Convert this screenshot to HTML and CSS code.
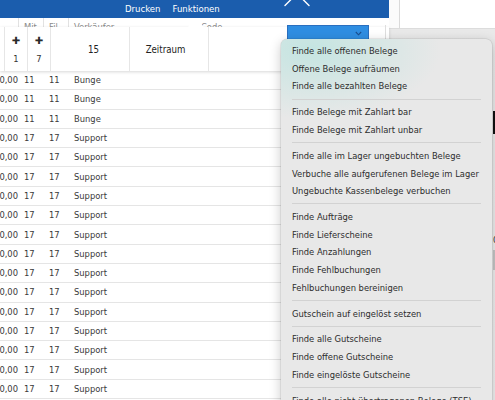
FILE: index.html
```html
<!DOCTYPE html>
<html lang="de">
<head>
<meta charset="utf-8">
<title>Belege</title>
<link rel="stylesheet" href="styles.css">
</head>
<body>
<div class="screen">
  <div class="app">
    <div class="topbar">
      <nav class="nav"><span class="nav-link">Drucken</span><span class="nav-link">Funktionen</span></nav>
      <svg class="x-icon" width="26" height="18" viewBox="0 0 26 18"><path d="M1 5.5 L7.5 -1 M18.5 -1 L25 5.5" stroke="#fff" stroke-width="1.4" fill="none" stroke-linecap="round"/></svg>
    </div>
    <div class="thead">
      <div class="th th-first"></div>
      <div class="th">Mit</div>
      <div class="th">Fil</div>
      <div class="th">Verkäufer</div>
      <div class="th th-code">Code</div>
    </div>
    <div class="toolbar">
      <div class="tcell tcell-edge"></div>
      <div class="tcell tcell-plus"><span class="plus">✚</span><span class="num">1</span></div>
      <div class="tcell tcell-plus"><span class="plus">✚</span><span class="num">7</span></div>
      <div class="tcell tcell-wide tcell-count">15</div>
      <div class="tcell tcell-wide tcell-range">Zeitraum</div>
      <div class="tcell tcell-rest">
        <div class="select"><svg class="chev" width="7" height="5" viewBox="0 0 7 5"><path d="M0.8 1 L3.5 3.8 L6.2 1" stroke="#1b4f8e" stroke-width="1.1" fill="none"/></svg></div>
        <div class="select-side"></div>
      </div>
    </div>
    <div class="rows">
      <div class="row"><span class="amt">0,00</span><span>11</span><span>11</span><span>Bunge</span></div>
      <div class="row"><span class="amt">0,00</span><span>11</span><span>11</span><span>Bunge</span></div>
      <div class="row"><span class="amt">0,00</span><span>11</span><span>11</span><span>Bunge</span></div>
      <div class="row"><span class="amt">0,00</span><span>17</span><span>17</span><span>Support</span></div>
      <div class="row"><span class="amt">0,00</span><span>17</span><span>17</span><span>Support</span></div>
      <div class="row"><span class="amt">0,00</span><span>17</span><span>17</span><span>Support</span></div>
      <div class="row"><span class="amt">0,00</span><span>17</span><span>17</span><span>Support</span></div>
      <div class="row"><span class="amt">0,00</span><span>17</span><span>17</span><span>Support</span></div>
      <div class="row"><span class="amt">0,00</span><span>17</span><span>17</span><span>Support</span></div>
      <div class="row"><span class="amt">0,00</span><span>17</span><span>17</span><span>Support</span></div>
      <div class="row"><span class="amt">0,00</span><span>17</span><span>17</span><span>Support</span></div>
      <div class="row"><span class="amt">0,00</span><span>17</span><span>17</span><span>Support</span></div>
      <div class="row"><span class="amt">0,00</span><span>17</span><span>17</span><span>Support</span></div>
      <div class="row"><span class="amt">0,00</span><span>17</span><span>17</span><span>Support</span></div>
      <div class="row"><span class="amt">0,00</span><span>17</span><span>17</span><span>Support</span></div>
      <div class="row"><span class="amt">0,00</span><span>17</span><span>17</span><span>Support</span></div>
      <div class="row"><span class="amt">0,00</span><span>17</span><span>17</span><span>Support</span></div>
      <div class="row"><span class="amt">0,00</span><span>17</span><span>17</span><span>Support</span></div>
    </div>
  </div>
  <div class="side">
    <div class="side-top"><div class="side-top-line"></div></div>
    <div class="side-body">
      <div class="side-dark"></div>
      <div class="side-zero">0</div>
      <div class="side-scroll"></div>
    </div>
  </div>
  <div class="menu">
    <div class="mi">Finde alle offenen Belege</div>
    <div class="mi">Offene Belege aufräumen</div>
    <div class="mi">Finde alle bezahlten Belege</div>
    <div class="sep"></div>
    <div class="mi">Finde Belege mit Zahlart bar</div>
    <div class="mi">Finde Belege mit Zahlart unbar</div>
    <div class="sep"></div>
    <div class="mi">Finde alle im Lager ungebuchten Belege</div>
    <div class="mi">Verbuche alle aufgerufenen Belege im Lager</div>
    <div class="mi">Ungebuchte Kassenbelege verbuchen</div>
    <div class="sep"></div>
    <div class="mi">Finde Aufträge</div>
    <div class="mi">Finde Lieferscheine</div>
    <div class="mi">Finde Anzahlungen</div>
    <div class="mi">Finde Fehlbuchungen</div>
    <div class="mi">Fehlbuchungen bereinigen</div>
    <div class="sep"></div>
    <div class="mi">Gutschein auf eingelöst setzen</div>
    <div class="sep"></div>
    <div class="mi">Finde alle Gutscheine</div>
    <div class="mi">Finde offene Gutscheine</div>
    <div class="mi">Finde eingelöste Gutscheine</div>
    <div class="sep"></div>
    <div class="mi">Finde alle nicht übertragenen Belege (TSE)</div>
  </div>
</div>
</body>
</html>
```

FILE: styles.css
```css
html, body {
  margin: 0;
  padding: 0;
  width: 495px;
  height: 400px;
  overflow: hidden;
  background: #ececec;
}

.screen {
  position: relative;
  display: flex;
  width: 495px;
  height: 400px;
  overflow: hidden;
  font-family: "DejaVu Sans Condensed", "DejaVu Sans", sans-serif;
  font-stretch: condensed;
  font-size: 9.3px;
  color: #3a3a3a;
}

.app {
  width: 389px;
  flex: none;
  display: flex;
  flex-direction: column;
  background: #fff;
}

/* top blue bar */
.topbar {
  height: 18px;
  background: #1b5dad;
  display: flex;
  align-items: flex-start;
  flex: none;
}
.nav {
  box-sizing: border-box;
  width: 284px;
  padding-left: 125px;
  display: flex;
  gap: 12px;
  height: 18px;
  align-items: center;
}
.nav-link {
  color: #fff;
  font-size: 9.5px;
  line-height: 18px;
}
.x-icon {
  display: block;
}

/* table header (mostly covered) */
.thead {
  height: 9px;
  overflow: hidden;
  display: grid;
  grid-template-columns: 18px 25px 25px 132px 1fr;
  background: #fff;
  flex: none;
}
.th {
  border-left: 1px solid #e2e2e2;
  padding-left: 5px;
  color: #8a8a8a;
  line-height: 12px;
  padding-top: 3px;
  white-space: nowrap;
}
.th-first {
  border-left: none;
}
.th-code {
  border-left: none;
  padding-left: 1px;
}

/* white toolbar popover */
.toolbar {
  position: relative;
  height: 44px;
  display: flex;
  background: #fff;
  box-shadow: 0 1px 3px rgba(0, 0, 0, 0.16);
  z-index: 2;
  flex: none;
  color: #222;
}
.toolbar::before {
  content: "";
  position: absolute;
  left: 188px;
  top: -9px;
  width: 0;
  height: 0;
  border-left: 8px solid transparent;
  border-right: 8px solid transparent;
  border-bottom: 9px solid #fff;
}
.tcell {
  border-right: 1px solid #e6e6e6;
  box-sizing: border-box;
  height: 44px;
}
.tcell-edge {
  width: 5px;
}
.tcell-plus {
  width: 23px;
  display: flex;
  flex-direction: column;
  align-items: center;
  padding-top: 8px;
}
.plus {
  font-family: "DejaVu Sans", sans-serif;
  font-stretch: normal;
  font-size: 10px;
  line-height: 12px;
  color: #2a2a2a;
}
.num {
  margin-top: 6px;
  line-height: 12px;
  color: #333;
}
.tcell-wide {
  width: 79px;
  display: flex;
  align-items: center;
  justify-content: center;
  font-size: 9.6px;
}
.tcell-count {
  padding-left: 7px;
}
.tcell-range {
  padding-right: 7px;
}
.tcell-rest {
  flex: 1;
  border-right: none;
  display: flex;
  align-items: flex-start;
  padding-left: 78px;
}
.select {
  box-sizing: border-box;
  width: 82px;
  height: 17px;
  margin-top: -2px;
  background: #2f8ee2;
  border: 1px solid #2a6fbf;
  display: flex;
  justify-content: flex-end;
  align-items: center;
  padding-right: 6px;
}
.chev {
  display: block;
}
.select-side {
  width: 17px;
  height: 17px;
  margin-top: -2px;
  border-right: 1px solid #dedede;
  box-sizing: border-box;
}

/* data rows */
.rows {
  display: flex;
  flex-direction: column;
  background: #fff;
}
.row {
  box-sizing: border-box;
  height: 19.3px;
  border-bottom: 1px solid #e5e5e5;
  display: grid;
  grid-template-columns: 18px 25px 25px 1fr;
  align-items: center;
  line-height: 18px;
  white-space: nowrap;
}
.row span {
  padding-left: 6px;
}
.row .amt {
  padding-left: 0;
  text-align: right;
  direction: rtl;
  overflow: visible;
}

/* background window on the right */
.side {
  flex: 1;
  display: flex;
  flex-direction: column;
  background: #ededed;
}
.side-top {
  height: 29px;
  background: #fbfbfb;
  border-bottom: 1px solid #dcdcdc;
  padding-left: 10px;
  box-sizing: border-box;
  flex: none;
}
.side-top-line {
  height: 100%;
  border-left: 1px solid #dadada;
  background: #fff;
}
.side-body {
  flex: 1;
  display: flex;
  flex-direction: column;
  align-items: flex-end;
  background: linear-gradient(180deg, #e9e9e9, #efefef);
}
.side-dark {
  width: 2px;
  height: 23px;
  margin-top: 82px;
  background: #111;
}
.side-zero {
  margin-top: 100px;
  width: 2px;
  overflow: hidden;
  color: #333;
  line-height: 12px;
}
.side-scroll {
  margin-top: 4px;
  width: 2px;
  height: 20px;
  background: #c4c4c4;
}

/* dropdown menu */
.menu {
  position: absolute;
  left: 281px;
  top: 39px;
  width: 211px;
  height: 380px;
  box-sizing: border-box;
  padding-top: 3.3px;
  border-radius: 6px;
  background:
    radial-gradient(ellipse 130px 70px at 30px 10px, rgba(190, 228, 224, 0.85), rgba(190, 228, 224, 0) 100%),
    #e8e8e8;
  box-shadow: 0 3px 12px rgba(0, 0, 0, 0.22), 0 0 0 0.5px rgba(0, 0, 0, 0.12);
  z-index: 5;
  color: #2c2c2c;
}
.mi {
  height: 17.6px;
  line-height: 17.6px;
  padding-left: 11px;
  white-space: nowrap;
}
.sep {
  height: 1px;
  margin: 3.7px 11px;
  background: #d2d2d2;
}
```
